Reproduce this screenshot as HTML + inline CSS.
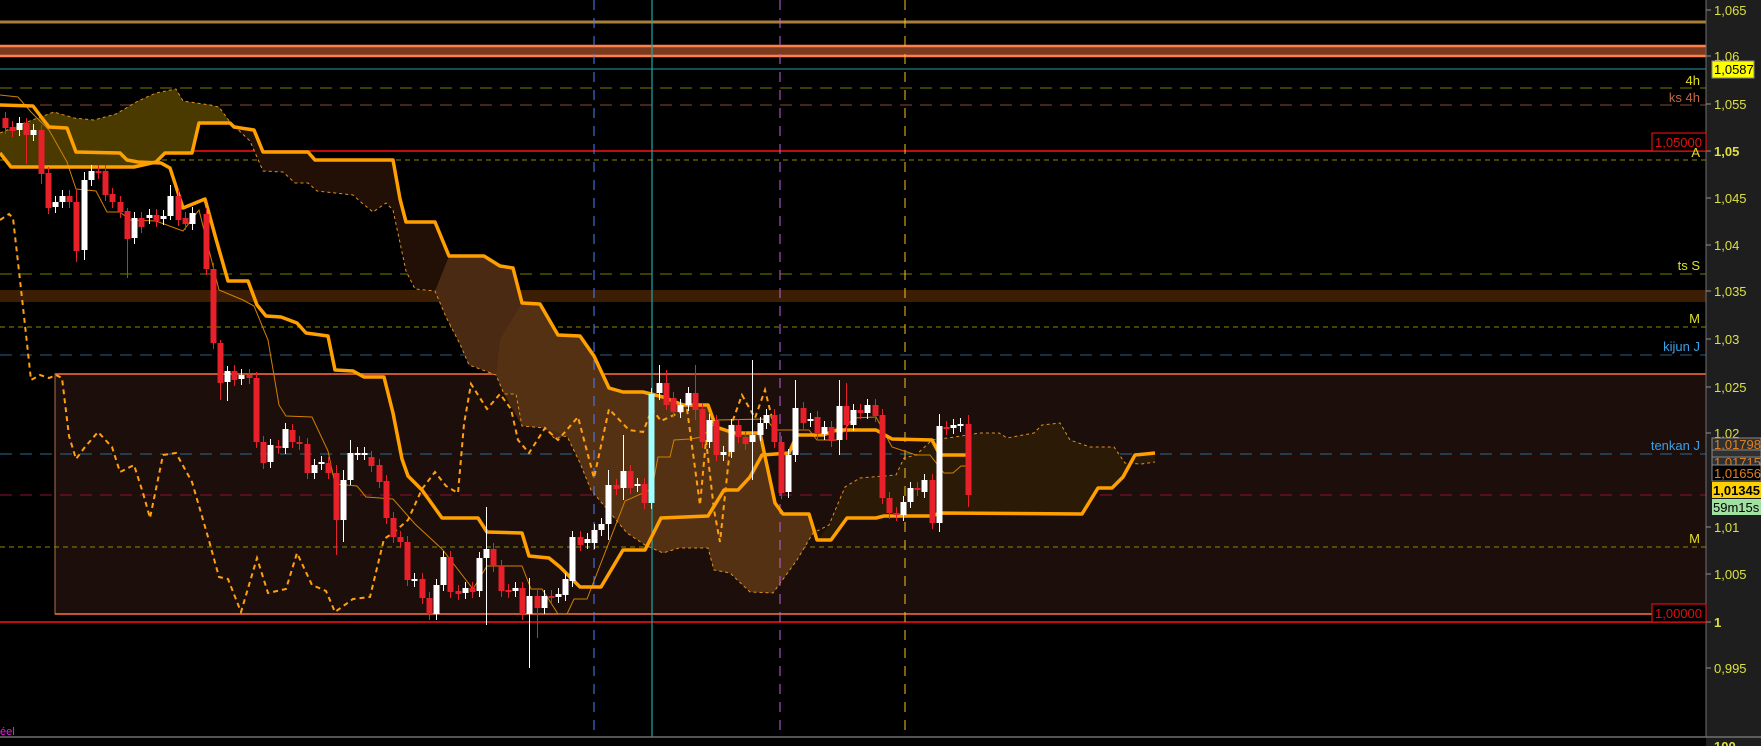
<!DOCTYPE html>
<html><head><meta charset="utf-8"><style>
html,body{margin:0;padding:0;background:#000;overflow:hidden}
svg{display:block}
text{font-family:"Liberation Sans",sans-serif}
</style></head><body>
<svg id="s" width="1761" height="746" viewBox="0 0 1761 746" xmlns="http://www.w3.org/2000/svg">
<rect width="1761" height="746" fill="#000"/>
<rect x="55" y="374" width="1651" height="240" fill="#1c0e0b" stroke="#b0704a" stroke-width="1"/>
<line x1="55" y1="374" x2="1706" y2="374" stroke="#ff7040" stroke-width="1.5"/>
<line x1="55" y1="614" x2="1706" y2="614" stroke="#ff7040" stroke-width="1.5"/>
<line x1="0" y1="22" x2="1706" y2="22" stroke="#a87f38" stroke-width="3"/>
<rect x="0" y="45" width="1706" height="12" fill="#7a3a20"/>
<line x1="0" y1="46" x2="1706" y2="46" stroke="#ff8048" stroke-width="2.5"/>
<line x1="0" y1="56" x2="1706" y2="56" stroke="#ff8048" stroke-width="2.5"/>
<line x1="0" y1="69" x2="1706" y2="69" stroke="#2a9aa0" stroke-width="1"/>
<line x1="0" y1="88" x2="1706" y2="88" stroke="#7a7a00" stroke-dasharray="12,8"/>
<line x1="0" y1="105" x2="1706" y2="105" stroke="#8a4a2a" stroke-dasharray="12,8"/>
<line x1="0" y1="160" x2="1706" y2="160" stroke="#8a8a00" stroke-dasharray="5,4"/>
<line x1="0" y1="274" x2="1706" y2="274" stroke="#7a7a00" stroke-dasharray="12,8"/>
<rect x="0" y="290" width="1706" height="12" fill="#3c1e05"/>
<line x1="0" y1="327" x2="1706" y2="327" stroke="#8a8a00" stroke-dasharray="5,4"/>
<line x1="0" y1="355" x2="1706" y2="355" stroke="#2a6080" stroke-dasharray="12,8"/>
<line x1="0" y1="454" x2="1706" y2="454" stroke="#2a6a90" stroke-dasharray="12,8"/>
<line x1="0" y1="495" x2="1706" y2="495" stroke="#901030" stroke-dasharray="12,8"/>
<line x1="0" y1="547" x2="1706" y2="547" stroke="#8a8a00" stroke-dasharray="5,4"/>
<line x1="0" y1="151" x2="1706" y2="151" stroke="#ff1010" stroke-width="1.5"/>
<line x1="0" y1="622" x2="1706" y2="622" stroke="#ff1010" stroke-width="1.5"/>
<!-- clouds -->
<polygon fill="#4a3a00" points="0,133 27,122 54,112 74,118 94,120 116,114 138,101 156,93 176,89 183,101 210,105 219,107 230,122 199,123 192,153 165,153 156,162 134,167 11,167 0,153"/>
<polygon fill="#221006" points="230,123 254,130 263,152 308,152 315,160 393,160 400,199 406,222 435,222 449,256 435,291 415,289 406,271 393,210 386,203 373,212 362,203 353,195 317,191 308,183 295,183 283,172 263,171 250,141"/>
<polygon fill="#4a2a12" points="449,256 484,256 500,266 513,268 522,303 540,304 558,335 580,336 594,356 609,388 623,392 643,392 652,392 663,397 683,405 708,405 716,427 734,433 760,433 775,503 783,514 809,514 817,540 813,533 797,560 773,593 750,592 730,573 714,570 708,548 679,548 663,553 645,545 627,533 591,490 580,463 567,436 554,438 545,428 522,426 516,394 504,394 496,375 480,369 469,365 460,344 446,317 435,291"/>
<polygon fill="#5a3416" opacity="0.7" points="522,303 540,304 558,335 580,336 594,356 609,388 623,392 652,392 663,397 683,405 708,405 716,427 734,433 760,433 775,503 783,514 809,514 813,533 797,560 773,593 750,592 730,573 714,570 708,548 679,548 663,553 645,545 627,533 591,490 580,463 567,436 545,428 522,426 504,394 496,375 500,340"/>
<polygon fill="#2a1a06" points="817,540 829,525 845,487 860,478 872,477 896,475 904,458 916,455 932,440 955,437 979,433 999,433 1007,438 1034,433 1042,425 1060,423 1070,440 1090,447 1114,447 1125,463 1141,464 1155,462 1155,453 1135,455 1123,477 1112,488 1098,488 1082,514 940,513 932,516 884,516 876,518 847,518 831,540"/>
<g fill="none" stroke="#e09020" stroke-width="1" stroke-dasharray="3,3">
<polyline points="0,133 27,122 54,112 74,118 94,120 116,114 138,101 156,93 176,89 183,101 210,105 219,107 230,122"/>
<polyline points="230,122 250,141 263,171 283,172 295,183 308,183 317,191 353,195 362,203 373,212 386,203 393,210 406,271 415,289 435,291 446,317 460,344 469,365 480,369 496,375 504,394 516,394 522,426 545,428 554,438 567,436 580,463 591,490 627,533 645,545 663,553 679,548 708,548 714,570 730,573 750,592 773,593 797,560 813,533 829,525 845,487 860,478 872,477 896,475 904,458 916,455 932,440 955,437 979,433 999,433 1007,438 1034,433 1042,425 1060,423 1070,440 1090,447 1114,447 1125,463 1141,464 1155,462"/>
</g>
<line x1="594" y1="0" x2="594" y2="737" stroke="#4a80ff" stroke-dasharray="10,8"/>
<line x1="652" y1="0" x2="652" y2="737" stroke="#20a8a8" stroke-width="1.2"/>
<line x1="780" y1="0" x2="780" y2="737" stroke="#c060e0" stroke-dasharray="10,8"/>
<line x1="905" y1="0" x2="905" y2="737" stroke="#ffc020" stroke-dasharray="10,8"/>
<polyline fill="none" stroke="#d08000" stroke-width="1" points="0,95 18,97 31,112 49,130 67,162 76,189 96,191 107,212 120,212 130,220 156,221 183,231 199,210 219,290 243,300 254,306 268,340 279,405 286,416 312,417 328,451 335,484 357,486 366,497 393,499 415,524 442,549 473,589 487,566 522,566 531,589 542,589 558,614 567,614 574,599 587,599 625,501 652,489 658,457 670,457 674,440 690,439 702,437 718,420 766,419 775,430 809,430 817,440 837,440 853,418 876,417 892,447 916,455 930,455 944,473 953,473 961,466 967,466"/>
<polyline fill="none" stroke="#ffa010" stroke-width="2" stroke-dasharray="5,4" points="0,220 9,214 13,218 22,298 31,380 40,375 49,378 56,375 62,378 69,436 76,459 85,447 98,432 112,447 120,472 134,465 143,493 150,518 163,455 176,453 192,482 208,537 219,577 228,579 241,612 257,558 268,593 286,589 297,553 312,585 326,591 335,612 353,599 370,597 384,539 393,533 408,520 422,489 435,472 446,486 458,493 464,424 471,384 487,409 500,394 511,409 518,440 529,453 545,428 558,440 578,417 594,478 609,409 629,430 643,432 652,409 661,421 687,409 700,505 706,440 714,510 720,542 733,420 742,395 755,418 765,390 775,430"/>
<g fill="none" stroke="#ffa000" stroke-width="3.5" stroke-linejoin="round">
<polyline points="0,105 33,106 45,122 49,127 67,128 76,152 120,153 127,160 138,162 161,163 170,168 183,208 205,199 216,239 228,281 248,281 257,305 266,316 281,317 297,323 306,333 328,336 335,370 353,371 364,377 384,377 393,413 402,459 408,476 422,490 442,518 478,518 487,532 522,533 529,556 549,558 560,567 580,587 601,587 623,550 645,550 661,518 708,516 724,490 738,490 750,477 762,455 789,453 797,435 823,435 837,430 876,430 892,439 932,440 940,455 967,455"/>
<polyline points="0,153 11,167 134,167 156,162 161,157 165,153 192,153 199,123 230,123 234,127 254,130 263,152 308,152 315,160 393,160 400,199 406,222 435,222 449,256 484,256 500,266 513,268 522,303 540,304 558,335 580,336 594,356 609,388 623,392 643,392 663,397 683,405 708,405 716,427 734,433 760,433 775,503 783,514 809,514 817,540 831,540 847,518 876,518 884,516 932,516 940,513 1082,514 1098,488 1112,488 1123,477 1135,455 1155,453"/>
</g>
<g id="candles"></g>
<rect x="1706" y="0" width="55" height="746" fill="#1e1e1e"/>
<line x1="1706" y1="0" x2="1706" y2="737" stroke="#707070"/>
<line x1="0" y1="737" x2="1761" y2="737" stroke="#707070" stroke-width="1.5"/>
<g stroke="#909090">
<line x1="1706" y1="10" x2="1711" y2="10"/><line x1="1706" y1="56" x2="1711" y2="56"/><line x1="1706" y1="104" x2="1711" y2="104"/><line x1="1706" y1="151" x2="1711" y2="151"/><line x1="1706" y1="198" x2="1711" y2="198"/><line x1="1706" y1="245" x2="1711" y2="245"/><line x1="1706" y1="291" x2="1711" y2="291"/><line x1="1706" y1="339" x2="1711" y2="339"/><line x1="1706" y1="387" x2="1711" y2="387"/><line x1="1706" y1="433" x2="1711" y2="433"/><line x1="1706" y1="527" x2="1711" y2="527"/><line x1="1706" y1="574" x2="1711" y2="574"/><line x1="1706" y1="622" x2="1711" y2="622"/><line x1="1706" y1="668" x2="1711" y2="668"/>
</g>
<g fill="#dce040" font-size="13">
<text x="1714" y="15">1,065</text><text x="1714" y="61">1,06</text><text x="1714" y="109">1,055</text><text x="1714" y="156" font-weight="bold">1,05</text><text x="1714" y="203">1,045</text><text x="1714" y="250">1,04</text><text x="1714" y="296">1,035</text><text x="1714" y="344">1,03</text><text x="1714" y="392">1,025</text><text x="1714" y="438">1,02</text><text x="1714" y="532">1,01</text><text x="1714" y="579">1,005</text><text x="1714" y="627" font-weight="bold">1</text><text x="1714" y="673">0,995</text><text x="1714" y="751" font-weight="bold">100</text>
</g>
<rect x="1712" y="61" width="42" height="17" fill="#ffff00" stroke="#888"/>
<text x="1714" y="74" font-size="13" fill="#000">1,0587</text>
<rect x="1712" y="438" width="49" height="12" fill="#303030" stroke="#888"/>
<text x="1714" y="449" font-size="13" fill="#e08020">1,01798</text>
<rect x="1712" y="450" width="49" height="8" fill="#303030" stroke="#888"/>
<rect x="1712" y="457" width="49" height="10" fill="#303030" stroke="#888"/>
<text x="1714" y="467" font-size="13" fill="#e08020">1,01715</text>
<rect x="1712" y="465" width="49" height="16" fill="#000" stroke="#888"/>
<text x="1714" y="478" font-size="13" fill="#e08020">1,01656</text>
<rect x="1712" y="482" width="49" height="16" fill="#ffd000"/>
<text x="1713" y="495" font-size="13" font-weight="bold" fill="#000">1,01345</text>
<rect x="1712" y="499" width="49" height="16" fill="#a0e0a0"/>
<text x="1713" y="512" font-size="13" fill="#000">59m15s</text>
<rect x="1652" y="133" width="54" height="18" fill="#000" stroke="#ff1010"/>
<text x="1655" y="147" font-size="13" fill="#e01010">1,05000</text>
<rect x="1652" y="604" width="54" height="18" fill="#000" stroke="#ff1010"/>
<text x="1655" y="618" font-size="13" fill="#e01010">1,00000</text>
<g font-size="13" text-anchor="end">
<text x="1700" y="85" fill="#e0e020">4h</text>
<text x="1700" y="102" fill="#c06a40">ks 4h</text>
<text x="1700" y="157" fill="#e0e020">A</text>
<text x="1700" y="270" fill="#e0e020">ts S</text>
<text x="1700" y="323" fill="#e0e020">M</text>
<text x="1700" y="351" fill="#3aa0e8">kijun J</text>
<text x="1700" y="450" fill="#3aa0e8">tenkan J</text>
<text x="1700" y="543" fill="#e0e020">M</text>
</g>
<text x="0" y="735" font-size="11" fill="#e020e0">éel</text>
</svg>
<script>
var C=[[5,118,128,'r'],[12,127,131,'r'],[19,123,130,'w'],[26,123,135,'r',118,164],[33,130,135,'w'],[41,130,174,'r',125,184],[48,173,208,'r'],[55,202,207,'w'],[62,196,202,'w'],[69,196,202,'r'],[76,202,251,'r',190,262],[84,180,250,'w',172,260],[91,171,180,'w'],[98,171,173,'r'],[105,171,195,'r'],[112,194,202,'r'],[120,202,212,'r'],[127,211,239,'r',208,278],[134,218,238,'w'],[141,218,227,'r'],[149,215,218,'w'],[156,215,221,'r'],[163,216,219,'w'],[170,196,216,'w',185,220],[178,196,220,'r'],[185,218,224,'r'],[192,213,224,'w'],[206,214,269,'r'],[213,269,343,'r'],[220,343,383,'r',340,400],[227,371,382,'w',366,401],[234,371,380,'r'],[241,375,379,'w'],[249,375,378,'r'],[256,378,442,'r'],[263,442,463,'r'],[270,445,462,'w'],[278,446,448,'r'],[285,429,448,'w'],[292,430,442,'r'],[299,442,444,'r'],[307,444,473,'r'],[314,465,473,'w'],[321,462,464,'w'],[328,463,473,'r'],[336,473,520,'r',465,555],[343,480,520,'w',470,542],[350,453,480,'w',440,485],[357,453,454,'w'],[364,453,454,'w'],[371,457,466,'r'],[379,465,482,'r'],[386,481,518,'r'],[393,518,537,'r'],[400,537,542,'r'],[407,542,580,'r'],[414,579,581,'w'],[422,579,598,'r'],[429,598,614,'r'],[436,585,614,'w'],[443,557,585,'w'],[450,557,592,'r'],[458,591,594,'r'],[465,588,593,'w'],[472,588,592,'r'],[479,558,591,'w'],[486,549,558,'w',507,625],[493,549,566,'r'],[501,566,591,'r'],[508,590,592,'r'],[515,588,591,'w'],[522,588,614,'r'],[529,596,614,'w',578,668],[537,596,608,'r',590,638],[544,596,608,'w'],[551,596,598,'r'],[558,594,597,'w'],[565,579,595,'w'],[572,537,581,'w'],[580,537,545,'r'],[587,539,543,'w'],[594,530,543,'w'],[601,524,530,'w'],[608,485,524,'w',470,540],[616,485,489,'r'],[623,471,488,'w',435,500],[630,471,488,'r'],[637,484,486,'w'],[644,484,503,'r'],[651,394,503,'c'],[659,383,393,'w',365,400],[666,383,405,'r',370,410],[673,398,412,'r'],[680,405,412,'w'],[688,393,405,'w'],[695,393,410,'r',365,420],[702,409,442,'r'],[709,420,442,'w'],[716,421,455,'r'],[723,452,455,'w'],[731,425,452,'w'],[738,425,437,'r'],[745,437,444,'r'],[752,435,442,'w',360,480],[760,423,435,'w'],[766,415,423,'w'],[774,415,442,'r'],[781,442,493,'r'],[788,455,492,'w'],[795,408,455,'w',380,462],[803,408,423,'r'],[810,419,421,'w'],[817,417,434,'r'],[824,427,434,'w'],[831,427,441,'r'],[839,406,440,'w',380,455],[846,406,425,'r',383,440],[853,410,425,'w'],[860,410,413,'r'],[867,405,413,'w'],[875,405,416,'r'],[882,415,498,'r'],[889,498,513,'r'],[896,513,515,'r'],[903,502,515,'w'],[910,488,502,'w'],[917,488,490,'r'],[924,480,492,'w'],[932,480,523,'r'],[939,426,523,'w',414,532],[946,427,429,'r'],[953,425,428,'w'],[960,424,426,'w'],[968,424,495,'r',415,507]];
var g=document.getElementById('candles'),h='';
C.forEach(function(c){var x=c[0],t=c[1],b=c[2],col=c[3]=='r'?'#e8202a':(c[3]=='c'?'#a0ffff':'#ffffff');var hi=c[4]||t-6,lo=c[5]||b+6;
h+='<line x1="'+(x+0.5)+'" y1="'+hi+'" x2="'+(x+0.5)+'" y2="'+lo+'" stroke="'+col+'" stroke-width="1"/>';
h+='<rect x="'+(x-2.5)+'" y="'+t+'" width="6" height="'+Math.max(2,b-t)+'" fill="'+col+'"/>';});
g.innerHTML=h;
</script>
</body></html>
